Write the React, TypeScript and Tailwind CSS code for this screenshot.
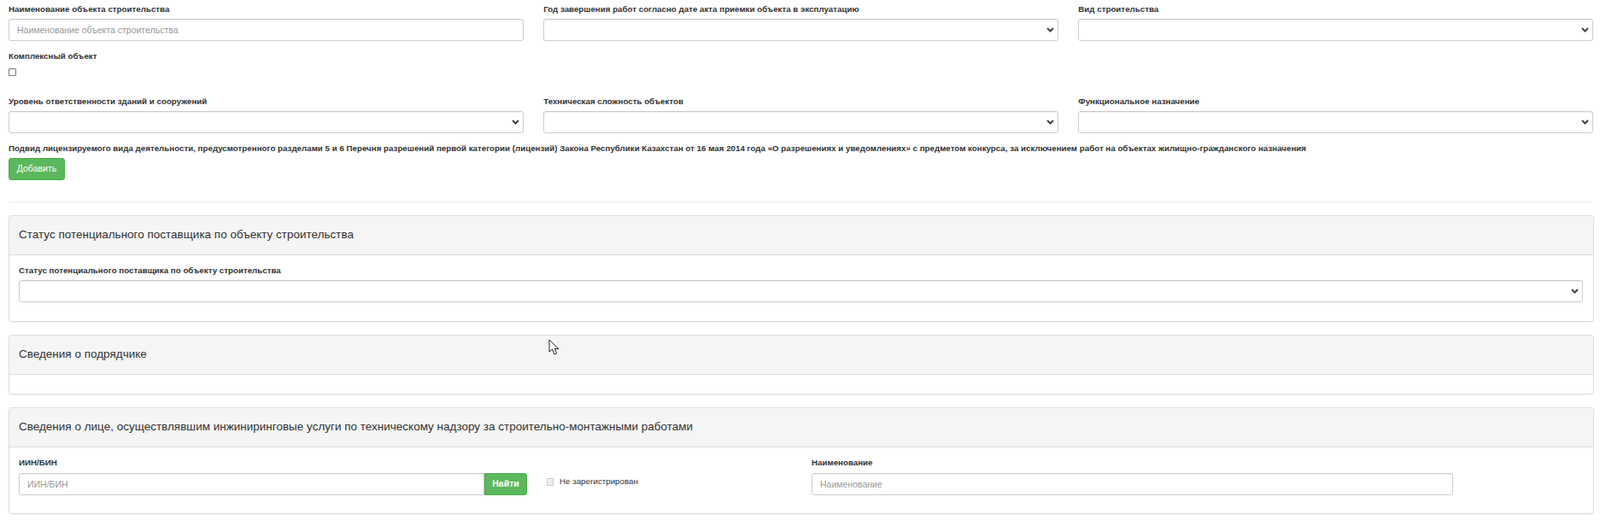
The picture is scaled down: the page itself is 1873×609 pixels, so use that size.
import React from "react";

const labelCls = "block h-[12px] text-[9.75px] leading-[12px] font-bold text-[#333] whitespace-nowrap";
const controlCls =
  "block w-full h-[26px] rounded-[3px] border border-[#ccc] bg-white px-[9px] text-[10.5px] text-[#555] placeholder:text-[#999] shadow-[inset_0_1px_1px_rgba(0,0,0,0.075)] outline-none";

function Select() {
  return (
    <div className="relative">
      <select className={controlCls + " appearance-none"} />
      <svg className="absolute right-[5px] top-[9px] w-[9px] h-[8px]" viewBox="0 0 9 8">
        <path d="M1 2 L4.5 5.5 L8 2" fill="none" stroke="#444" strokeWidth="2" />
      </svg>
    </div>
  );
}

function Field({ label, children }: { label: string; children: React.ReactNode }) {
  return (
    <div>
      <label className={labelCls}>{label}</label>
      <div className="mt-[5px]">{children}</div>
    </div>
  );
}

function Panel({ title, bodyCls, children }: { title: string; bodyCls: string; children?: React.ReactNode }) {
  return (
    <section className="rounded-[4px] border border-[#ddd] bg-white shadow-[0_1px_1px_rgba(0,0,0,0.05)]">
      <div className="h-[46px] flex items-center px-[11px] bg-[#f5f5f5] border-b border-[#ddd] rounded-t-[4px] text-[13.5px] text-[#333]">
        {title}
      </div>
      <div className={bodyCls}>{children}</div>
    </section>
  );
}

export default function App() {
  return (
    <div className="relative w-[1873px] h-[609px] overflow-hidden bg-white pl-[10px] pr-[8px] pt-[5px] font-['Liberation_Sans',Arial,sans-serif]">
      <div className="grid grid-cols-3 gap-x-[23.5px]">
        <Field label="Наименование объекта строительства">
          <input className={controlCls} placeholder="Наименование объекта строительства" />
        </Field>
        <Field label="Год завершения работ согласно дате акта приемки объекта в эксплуатацию">
          <Select />
        </Field>
        <Field label="Вид строительства">
          <Select />
        </Field>
      </div>

      <div className="mt-[12px]">
        <label className={labelCls}>Комплексный объект</label>
        <input type="checkbox" className="block mt-[8px] w-[9px] h-[9px] appearance-none rounded-[1px] border border-[#767676] bg-white" />
      </div>

      <div className="grid grid-cols-3 gap-x-[23.5px] mt-[24px]">
        <Field label="Уровень ответственности зданий и сооружений">
          <Select />
        </Field>
        <Field label="Техническая сложность объектов">
          <Select />
        </Field>
        <Field label="Функциональное назначение">
          <Select />
        </Field>
      </div>

      <label className={labelCls + " mt-[12px]"}>
        Подвид лицензируемого вида деятельности, предусмотренного разделами 5 и 6 Перечня разрешений первой категории (лицензий) Закона Республики Казахстан от 16 мая 2014 года «О разрешениях и уведомлениях» с предметом конкурса, за исключением работ на объектах жилищно-гражданского назначения
      </label>
      <button className="block mt-[5px] w-[66px] h-[26px] rounded-[3px] border border-[#4cae4c] bg-[#5cb85c] text-white text-[10.5px]">
        Добавить
      </button>

      <hr className="mt-[25px] border-0 border-t border-[#eee]" />

      <div className="mt-[15px] flex flex-col gap-[15px] mr-[-1px]">
        <Panel title="Статус потенциального поставщика по объекту строительства" bodyCls="h-[77px] pl-[11px] pr-[12px] pt-[12px]">
          <Field label="Статус потенциального поставщика по объекту строительства">
            <Select />
          </Field>
        </Panel>

        <Panel title="Сведения о подрядчике" bodyCls="h-[22px]" />

        <Panel title="Сведения о лице, осуществлявшим инжиниринговые услуги по техническому надзору за строительно-монтажными работами" bodyCls="h-[77px] pl-[11px] pr-[12px] pt-[12px] flex items-start">
          <div className="w-[595px]">
            <label className={labelCls}>ИИН/БИН</label>
            <div className="mt-[6px] flex">
              <input className={controlCls + " rounded-r-none flex-1 min-w-0"} placeholder="ИИН/БИН" />
              <button className="w-[50px] h-[26px] rounded-r-[3px] border border-[#4cae4c] bg-[#5cb85c] text-white font-bold text-[10.5px]">
                Найти
              </button>
            </div>
          </div>
          <div className="ml-[23px] mt-[21px] flex items-center gap-[7px]">
            <input type="checkbox" disabled className="block w-[8px] h-[9px] appearance-none rounded-[1px] border border-[#ccc] bg-[#eee]" />
            <span className="w-[92px] text-[9.75px] text-[#333] whitespace-nowrap">Не зарегистрирован</span>
          </div>
          <div className="ml-[203px] w-[751px]">
            <label className={labelCls}>Наименование</label>
            <div className="mt-[6px]">
              <input className={controlCls} placeholder="Наименование" />
            </div>
          </div>
        </Panel>
      </div>

      <svg className="absolute left-[642px] top-[397px] w-[14px] h-[20px]" viewBox="0 0 14 20">
        <path d="M1 1 L1 15 L4.5 12 L7 18 L9.5 17 L7.5 11.5 L12 11.5 Z" fill="#fff" stroke="#222" strokeWidth="1" />
      </svg>
    </div>
  );
}
